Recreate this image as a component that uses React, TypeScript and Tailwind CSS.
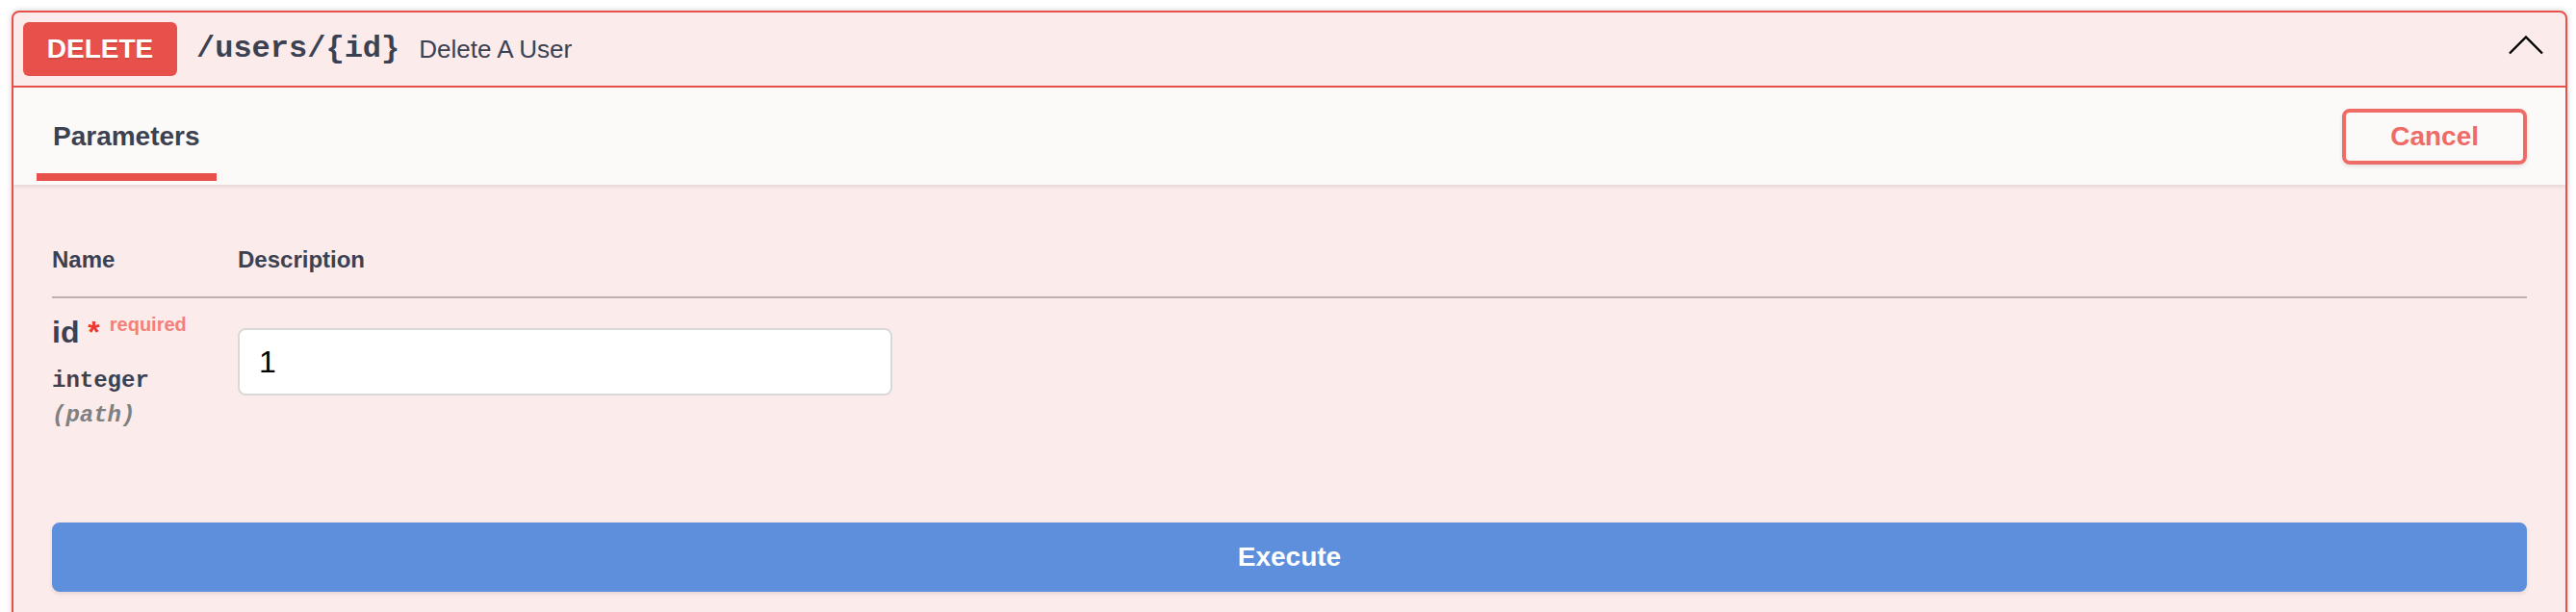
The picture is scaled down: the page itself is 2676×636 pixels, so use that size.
import React from "react";

const OperationBlock = () => {
  return (
    <div className="min-h-[636px] bg-white pl-[12px] pr-[9px] pt-[11px] font-['Liberation_Sans',Arial,sans-serif] text-[#3b4151]">
      <div className="overflow-hidden rounded-[8px] border-2 border-[#e8514b] bg-[#fcebeb] shadow-[0_0_6px_rgba(0,0,0,0.19)]">
        {/* summary row */}
        <div className="flex items-center border-b-2 border-[#e8514b] p-[10px]">
          <span className="flex h-[56px] w-[160px] items-center justify-center rounded-[6px] bg-[#e8514b] text-[28px] font-bold text-white [text-shadow:0_2px_0_rgba(0,0,0,0.1)]">
            DELETE
          </span>
          <span className="px-[20px] font-['Liberation_Mono','Courier_New',monospace] text-[32px] font-bold">
            /users/{"{id}"}
          </span>
          <span className="text-[26px]">Delete A User</span>
          <svg
            className="mb-[8px] ml-auto mr-[13px]"
            width="36"
            height="20"
            viewBox="0 0 36 20"
            fill="none"
          >
            <polyline points="1,18.5 18,1.5 35,18.5" stroke="#000" strokeWidth="2.4" />
          </svg>
        </div>

        {/* section header */}
        <div className="relative flex h-[101px] items-center justify-between bg-[#fcfaf9] pl-[24px] pr-[40px] shadow-[0_2px_4px_rgba(0,0,0,0.1)]">
          <div className="relative flex h-full items-center px-[17px]">
            <h4 className="text-[28px] font-bold">Parameters</h4>
            <span className="absolute bottom-[4px] left-0 right-0 h-[8px] bg-[#e8514b]" />
          </div>
          <button className="h-[58px] rounded-[8px] border-4 border-[#ef6b67] px-[46px] text-[28px] font-bold text-[#ef6b67] shadow-[0_2px_4px_rgba(0,0,0,0.1)]">
            Cancel
          </button>
        </div>

        {/* parameters table */}
        <div className="px-[40px] pb-[37px] pt-[40px]">
          <table className="w-full border-collapse">
            <thead>
              <tr className="border-b-2 border-[#bdb1b4]">
                <th className="w-[193px] py-[24px] text-left text-[24px] font-bold leading-[28px]">Name</th>
                <th className="py-[24px] text-left text-[24px] font-bold leading-[28px]">Description</th>
              </tr>
            </thead>
            <tbody>
              <tr>
                <td className="pb-[20px] pt-[17px] align-top">
                  <div className="whitespace-nowrap text-[32px] font-bold leading-[37px]">
                    id
                    <span className="text-[#eb3b2f]">&nbsp;*</span>
                    <span className="relative top-[-12px] px-[10px] text-[20px] text-[#f4807a]">required</span>
                  </div>
                  <div className="mt-[14px] font-['Liberation_Mono','Courier_New',monospace] text-[24px] font-bold leading-[28px]">
                    integer
                  </div>
                  <div className="mt-[8px] font-['Liberation_Mono','Courier_New',monospace] text-[24px] font-bold italic leading-[28px] text-[#808080]">
                    (path)
                  </div>
                </td>
                <td className="pb-[20px] pt-[17px] align-top">
                  <input
                    className="mt-[14px] h-[70px] w-[680px] rounded-[8px] border-2 border-[#d9d9d9] bg-white px-[20px] font-['Liberation_Sans',Arial,sans-serif] text-[32px] text-black outline-none"
                    defaultValue="1"
                  />
                </td>
              </tr>
            </tbody>
          </table>
        </div>

        {/* execute */}
        <div className="px-[40px] pb-[40px] pt-[40px]">
          <button className="h-[72px] w-full rounded-[8px] border-4 border-[#5d8fdd] bg-[#5d8fdd] text-[28px] font-bold text-white shadow-[0_2px_4px_rgba(0,0,0,0.1)]">
            Execute
          </button>
        </div>
      </div>
    </div>
  );
};

export default function App() {
  return <OperationBlock />;
}
